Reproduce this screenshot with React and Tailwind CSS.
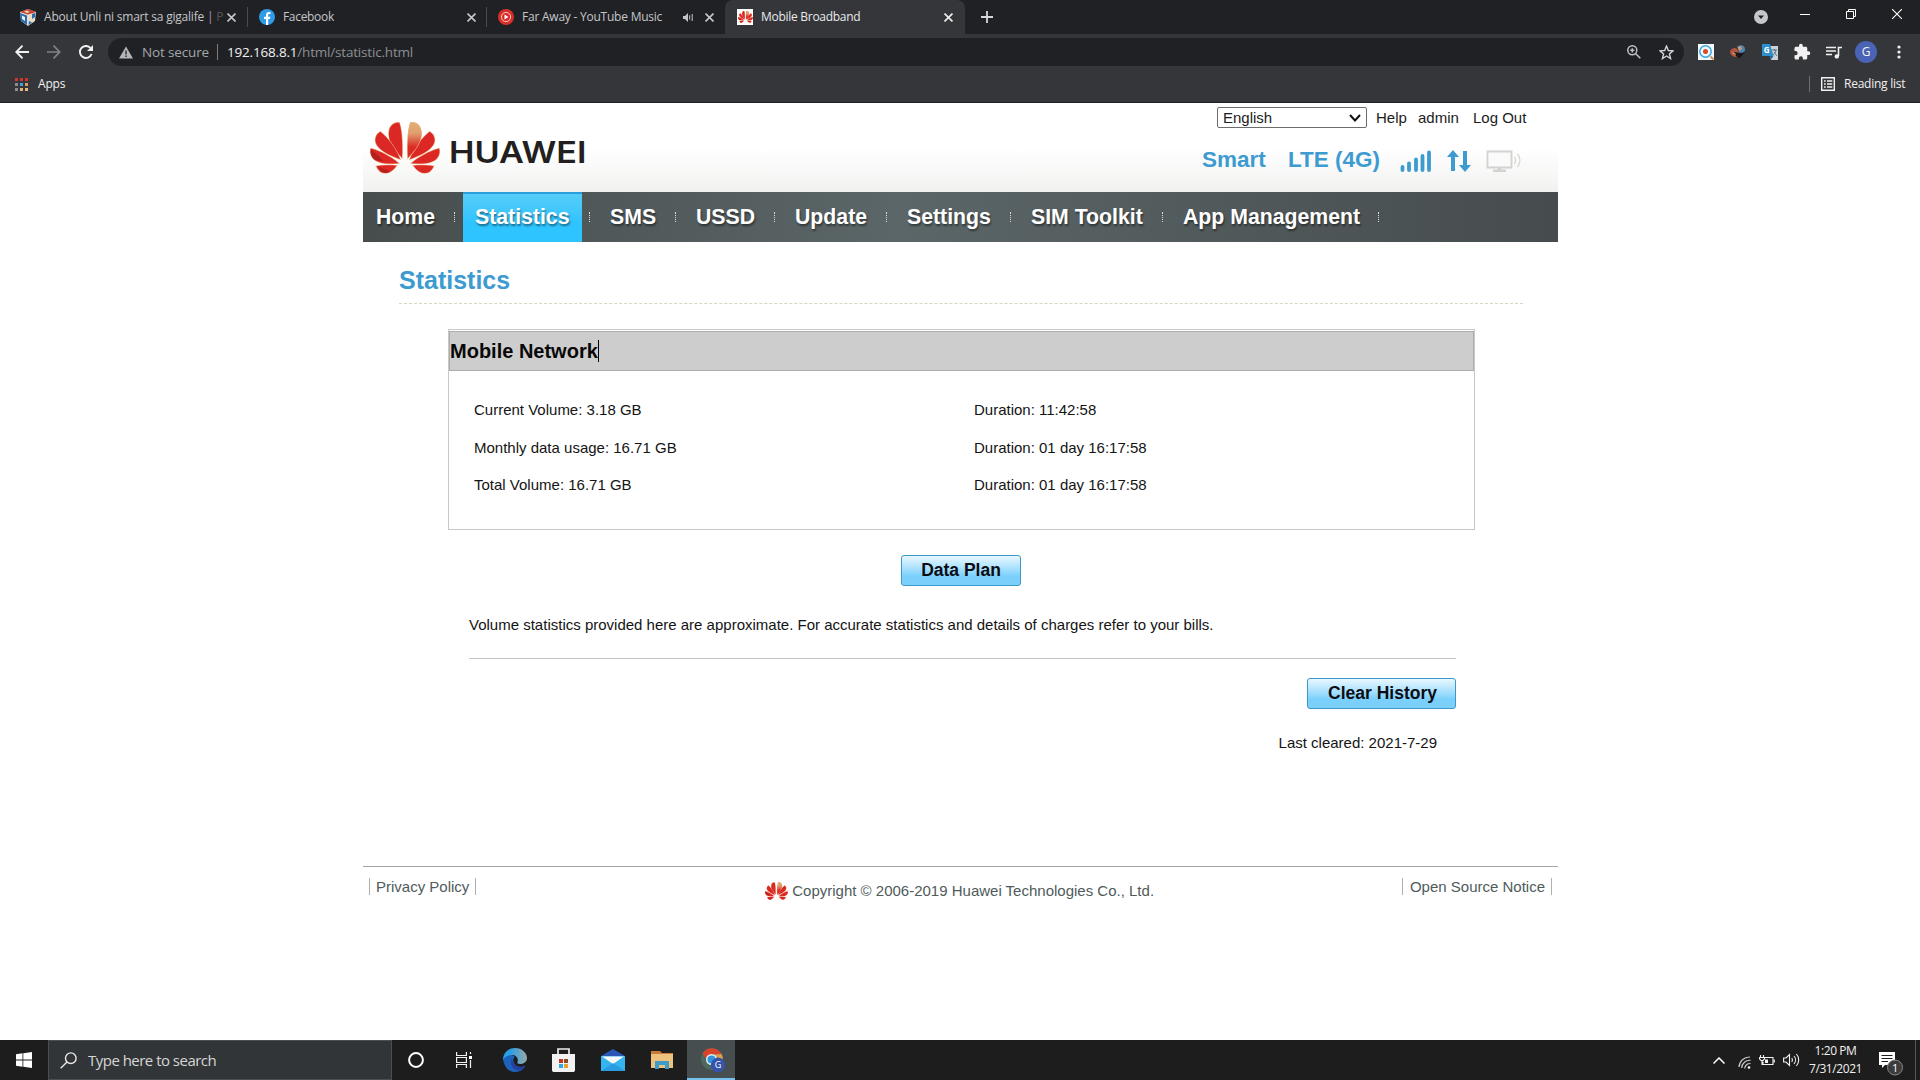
import React from "react";

const ui = "font-['Open_Sans','Noto_Sans',sans-serif]";

function Petals({ className }) {
  const half = (
    <>
      <path d="M32 36C22 26 17 17 19 8C20 3 24 0 29 0C31 4 33 18 32 36Z" />
      <path d="M30 37.5C18 33 8 28 5.500 21C4 16 6 12 10 9.500C17 15 26 26 30 37.500Z" />
      <path d="M28.500 41.500C17 42.500 8 42 3 37C0 33.500 -.5 30 .5 26.500C10 29 21 35 28.500 41.500Z" />
      <path d="M26.500 44C22 50 17.500 52 14 51.500C10 51 7.500 48 6 44.500C12 43.500 20 43.500 26.500 44Z" />
    </>
  );
  return (
    <svg viewBox="-0.500 -0.500 71 53" preserveAspectRatio="none" className={className}>
      <defs>
        <linearGradient id="petal" x1="0" y1="0" x2="0" y2="1">
          <stop offset="0" stopColor="#e0b070" />
          <stop offset=".3" stopColor="#e0a070" />
          <stop offset=".7" stopColor="#dc2a24" />
        </linearGradient>
      </defs>
      <g stroke="#ecb488" strokeWidth="1.200" paintOrder="stroke">
        <g fill="#dc2824">{half}</g>
        <g fill="#dc2824" transform="translate(70 0) scale(-1 1)">
          {half}
          <path fill="url(#petal)" d="M32 36C22 26 17 17 19 8C20 3 24 0 29 0C31 4 33 18 32 36Z" />
        </g>
        <path fill="#a31c1c" stroke="none" d="M3 37C0 33.500 -.5 30 .5 27L13 39C8 39 5 39 3 37ZM8 45L20 50C14 53 10 50 8 45Z" opacity=".7" />
      </g>
    </svg>
  );
}

function Close({ className }) {
  return (
    <svg viewBox="0 0 10 10" className={"h-[9px] w-[9px] shrink-0 " + className} stroke="currentColor" strokeWidth="1.800">
      <path d="M.6 .6L9.400 9.400M9.400 .6L.6 9.400" />
    </svg>
  );
}

function TabStrip() {
  return (
    <div className="flex h-[34px] bg-[#202124] text-[12px] text-[#c4c6ca]">
      <div className="flex w-[247px] items-center pl-[19px]">
        <svg viewBox="0 0 17 17" className="h-[17px] w-[17px]">
          <path fill="#e9dccb" d="M1 3L9 0L17 3L16 12L9 17L2 12Z" />
          <path fill="#c8402c" d="M1 3L9 0L17 3L9 5.500Z" />
          <path fill="#e8d8c8" d="M5 2.600L8 1.500L11 3L8 4Z" />
          <path fill="#2b6cb0" d="M1 4L8 6.500V16L2 12ZM13 5L16 4V8L13 10Z" />
          <path fill="#e8eef5" d="M3 6.500L6 8V12L3 10Z" />
          <path fill="#2b6cb0" d="M10 12L13 13.500L9.500 16Z" />
        </svg>
        <div className="ml-2 w-[180px] whitespace-nowrap tracking-[-0.210px]">
          About Unli ni smart sa gigalife <span className="text-[#b58fc0]">|</span> <span className="text-[#55575b]">P</span>
        </div>
        <Close className="ml-[3px] text-[#c4c6ca]" />
      </div>
      <div className="mt-[7px] h-5 w-px bg-[#4a4c50]" />
      <div className="flex w-[238px] items-center pl-[11px]">
        <svg viewBox="0 0 16 16" className="h-4 w-4">
          <circle cx="8" cy="8" r="8" fill="#2f9be6" />
          <path fill="#fff" d="M7 16V10H5V7.700H7V6C7 3.900 8.200 2.900 10 2.900L11.500 3V5H10.400C9.500 5 9.200 5.500 9.200 6.200V7.700H11.400L11 10H9.200V16Z" />
        </svg>
        <div className="ml-2 w-[184px] tracking-[-0.320px]">Facebook</div>
        <Close className="text-[#c4c6ca]" />
      </div>
      <div className="mt-[7px] h-5 w-px bg-[#4a4c50]" />
      <div className="flex w-[238px] items-center pl-[11px]">
        <svg viewBox="0 0 16 16" className="h-4 w-4" fill="none">
          <circle cx="8" cy="8" r="8" fill="#d92f2c" />
          <circle cx="8" cy="8" r="4.600" stroke="#f5c8b8" strokeWidth="1" />
          <path fill="#fff" d="M6.500 5.500L10.500 8L6.500 10.500Z" />
        </svg>
        <div className="ml-2 w-[161px] whitespace-nowrap tracking-[-0.230px]">Far Away - YouTube Music</div>
        <svg viewBox="0 0 11 9" className="h-[9px] w-[11px] shrink-0" fill="none" stroke="#c4c6ca">
          <path fill="#c4c6ca" stroke="none" d="M0 3H2L5 0V9L2 6H0Z" />
          <path d="M6.700 2.300V6.700M9.200 1V8" />
        </svg>
        <Close className="ml-[11px] text-[#c4c6ca]" />
      </div>
      <div className="flex h-[34px] w-[240px] items-center rounded-t-[8px] bg-[#35363a] pl-3 text-[#e8eaed]">
        <span className="flex h-4 w-4 items-center justify-center bg-white">
          <Petals className="h-3 w-[15px]" />
        </span>
        <div className="ml-2 w-[183px] tracking-[-0.280px]">Mobile Broadband</div>
        <Close className="text-[#eeeeee]" />
      </div>
      <svg viewBox="0 0 12 12" className="ml-4 mt-[11px] h-3 w-3" stroke="#d5d7da" strokeWidth="1.800">
        <path d="M6 0V12M0 6H12" />
      </svg>
      <div className="ml-auto flex">
        <svg viewBox="0 0 14 14" className="mt-[10px] h-[14px] w-[14px]">
          <circle cx="7" cy="7" r="7" fill="#c4c6ca" />
          <path d="M4 5.500H10L7 9Z" fill="#202124" />
        </svg>
        <div className="ml-8 mt-[14px] h-px w-[10px] bg-white" />
        <svg viewBox="0 0 10 10" className="ml-9 mt-[9px] h-[10px] w-[10px]" fill="none" stroke="#fff">
          <path d="M.5 2.500H7.500V9.500H.5ZM2.500 2.500V.5H9.500V7.500H7.500" />
        </svg>
        <svg viewBox="0 0 10 10" className="ml-9 mr-[18px] mt-[9px] h-[10px] w-[10px]" stroke="#fff" strokeWidth="1.100">
          <path d="M0 0L10 10M10 0L0 10" />
        </svg>
      </div>
    </div>
  );
}

function Toolbar() {
  return (
    <div className="flex h-[36px] items-center bg-[#35363a] text-[14px]">
      <svg viewBox="0 0 14 14" className="ml-[15px] h-[14px] w-[14px]" fill="none" stroke="#f1f1f1" strokeWidth="1.900">
        <path d="M14 7H1.500M7.500 .7L1.300 7L7.500 13.300" />
      </svg>
      <svg viewBox="0 0 14 14" className="ml-[18px] h-[14px] w-[14px]" fill="none" stroke="#818386" strokeWidth="1.700">
        <path d="M0 7H12.500M6.500 .7L12.700 7L6.500 13.300" />
      </svg>
      <svg viewBox="0 0 14 14" className="ml-[18px] h-[14px] w-[14px]" fill="none" stroke="#f1f1f1" strokeWidth="1.900">
        <path d="M12.600 9A6 6 0 1 1 11.500 3" />
        <path fill="#f1f1f1" stroke="none" d="M14 0V6H8Z" />
      </svg>
      <div className="ml-[15px] flex h-7 w-[1576px] items-center rounded-full bg-[#202124] pl-[11px]">
        <svg viewBox="0 0 14 12" className="h-[13px] w-[14px]">
          <path fill="#b4b6ba" d="M7 0L14 12H0Z" />
          <path stroke="#202124" strokeWidth="1.300" d="M7 4V8M7 9V10.400" />
        </svg>
        <div className="ml-[9px] w-[68px] whitespace-nowrap text-[13.500px] tracking-[-0.150px] text-[#a3a6aa]">Not secure</div>
        <div className="ml-[7px] h-4 w-px bg-[#7b7d81]" />
        <div className="ml-[9px] whitespace-nowrap text-[13.500px] tracking-[-0.190px] text-[#8d9094]">
          <span className="text-[#f1f1f1]">192.168.8.1</span>/html/statistic.html
        </div>
        <svg viewBox="0 0 14 14" className="ml-auto h-[14px] w-[14px]" fill="none" stroke="#bdc1c6" strokeWidth="1.500">
          <circle cx="5.300" cy="5.300" r="4.500" />
          <path d="M8.700 8.700L13.300 13.300M5.300 3.200V7.400M3.200 5.300H7.400" />
        </svg>
        <svg viewBox="0 0 14 14" className="ml-[18px] mr-[10px] h-[15px] w-[15px]" fill="none" stroke="#d0d3d7" strokeWidth="1.300">
          <path d="M7 1L8.700 5.100L13.100 5.400L9.700 8.300L10.800 12.700L7 10.300L3.200 12.700L4.300 8.300L.9 5.400L5.300 5.100Z" />
        </svg>
      </div>
      <svg viewBox="0 0 16 16" className="ml-[14px] h-4 w-4" fill="none">
        <path fill="#f2f8fc" d="M0 0H16V16H0Z" />
        <circle cx="7.500" cy="7.500" r="5.700" stroke="#35a5e0" strokeWidth="1.500" />
        <circle cx="7.500" cy="7.500" r="2.500" fill="#d64a28" />
        <path d="M12.500 12.500L15.500 15.500" stroke="#d89050" strokeWidth="2" />
      </svg>
      <svg viewBox="0 0 16 16" className="ml-4 h-4 w-4">
        <path fill="#b5563c" d="M0 7C2 4 5 3 7 5L11 12L7 13C3 13 0 11 0 7Z" />
        <path fill="#4c83b5" d="M7 3C10 0 15 1 15 5C15 8 13 10 10 10Z" />
        <path fill="#15171a" d="M3 8L11 9L15 8L10 14L7 13Z" />
        <path fill="#d49a68" d="M8 3L11 2L12 5L9 7ZM2 8L5 9L6 11L3 10Z" />
      </svg>
      <svg viewBox="0 0 16 16" className="ml-4 h-4 w-4">
        <path fill="#c9d3d8" d="M6 2H16V16H9Z" />
        <path fill="#2d8fce" d="M0 0H8L11.500 12H0Z" />
        <path fill="#1b68a8" d="M8 12H11.500L9 15.500Z" />
        <path d="M10 6H15M12.500 5V7M14 6C13.500 9 12 10.500 11 11M12 8L15 12" stroke="#5d7480" fill="none" />
        <text x="1.700" y="9" fontSize="8" fontWeight="700" fill="#fff">G</text>
      </svg>
      <svg viewBox="0 0 24 24" className="ml-[15px] h-[18px] w-[18px]" fill="#f1f1f1">
        <path d="M20.500 11H19V7c0-1.100-.9-2-2-2h-4V3.500a2.500 2.500 0 0 0-5 0V5H4c-1.100 0-2 .9-2 2v3.800h1.500a2.700 2.700 0 0 1 0 5.400H2V20c0 1.100.9 2 2 2h3.800v-1.500a2.700 2.700 0 0 1 5.400 0V22H17c1.100 0 2-.9 2-2v-4h1.500a2.500 2.500 0 0 0 0-5z" />
      </svg>
      <svg viewBox="0 0 16 13" className="ml-[15px] h-[13px] w-4" fill="none" stroke="#f1f1f1" strokeWidth="1.600">
        <path d="M0 1.500H10M0 5H10M0 8.500H6M12.500 10V1.500H16" />
        <circle cx="10.800" cy="10.400" r="2.200" fill="#f1f1f1" stroke="none" />
      </svg>
      <div className="ml-[13px] flex h-[22px] w-[22px] items-center justify-center rounded-full bg-[#4a63b4] text-[12px] text-[#f5f5f5]">G</div>
      <svg viewBox="0 0 4 14" className="ml-5 h-[14px] w-1" fill="#f1f1f1">
        <circle cx="2" cy="2" r="1.600" />
        <circle cx="2" cy="7" r="1.600" />
        <circle cx="2" cy="12" r="1.600" />
      </svg>
    </div>
  );
}

function Bookmarks() {
  const dots = ["#d0342c", "#d0342c", "#d0342c", "#8a8d91", "#4a9fd8", "#d8a060", "#8a8d91", "#e0b080", "#e8b878"];
  return (
    <div className="flex h-[32px] items-center bg-[#35363a] pb-[4px] text-[12px] text-[#f1f1f1]">
      <div className="ml-[15px] grid grid-cols-3 gap-x-[2px] gap-y-[2px]">
        {dots.map((c, i) => (
          <span key={i} className="h-[3px] w-[3px]" style={{ background: c }} />
        ))}
      </div>
      <div className="ml-[10px] tracking-[-0.200px]">Apps</div>
      <div className="ml-auto h-4 w-px bg-[#6d6f73]" />
      <svg viewBox="0 0 14 14" className="ml-[11px] h-[14px] w-[14px]" fill="none" stroke="#f1f1f1" strokeWidth="1.400">
        <path d="M.7 .7H13.300V13.300H.7ZM3 4H4.700M6 4H11.300M3 7H4.700M6 7H11.300M3 10H4.700M6 10H11.300" />
      </svg>
      <div className="ml-[9px] mr-[14px] w-[62px] whitespace-nowrap tracking-[-0.250px]">Reading list</div>
    </div>
  );
}

function Header() {
  return (
    <div className="flex h-[89px] bg-linear-to-b from-white from-50% to-[#f1f2f0]">
      <Petals className="ml-[7px] mt-[19px] h-[52px] w-[70px]" />
      <svg viewBox="0 0 138 30" className="ml-[9px] mt-[30px] h-[40px] w-[144px]" preserveAspectRatio="none" overflow="visible">
        <g transform="scale(.9583 .75)">
          <text x="0" y="30" fontSize="30.500" fontWeight="600" fill="#231f20" textLength="137.500" lengthAdjust="spacingAndGlyphs" fontFamily="Inter, sans-serif">HUAWEI</text>
        </g>
      </svg>
      <div className="ml-auto flex w-[360px] flex-col text-[15px] text-[#1c1c1c]">
        <div className="mt-1 flex h-[21px] items-center">
          <div className="ml-[19px] flex h-[21px] w-[150px] items-center justify-between rounded-[2px] border border-[#6d6d6d] bg-white pl-[5px] pr-[5px] pt-px">
            English
            <svg viewBox="0 0 12 8" className="h-2 w-3" fill="none" stroke="#111" strokeWidth="2"><path d="M1 1L6 6.500L11 1" /></svg>
          </div>
          <div className="ml-[9px] w-[42px] pt-[2px]">Help</div>
          <div className="w-[55px] pt-[2px]">admin</div>
          <div className="whitespace-nowrap pt-[2px]">Log Out</div>
        </div>
        <div className="mt-[19px] flex h-[26px] items-center font-bold text-[22.500px] text-[#3d9bd1]">
          <div className="ml-1 w-[86px]">Smart</div>
          <div className="w-[112px] whitespace-nowrap">LTE (4G)</div>
          <svg viewBox="0 0 32 22" className="mt-[2px] h-[22px] w-8" stroke="#3d9bd1" strokeWidth="3.800" strokeLinecap="round">
            <path d="M2.500 17V20M9 13.500V20M16 9.500V20M22.500 6V20M29 2.500V20" />
          </svg>
          <svg viewBox="0 0 24 22" className="ml-[15px] mt-px h-[22px] w-6" fill="#3d9bd1">
            <path d="M6 0L12 7H8V21H4V7H0ZM18 22L24 15H20V1H16V15H12Z" />
          </svg>
          <svg viewBox="0 0 36 22" className="ml-[15px] mt-px h-[22px] w-9" fill="none" stroke="#d2d2cf" strokeWidth="1.800">
            <path fill="#fafafa" d="M1.500 1.500H25.500V17.500H1.500Z" />
            <path d="M7 21H20M13.500 17.500V21" strokeWidth="3" />
            <path d="M28.500 7C30 9 30 11 28.500 14M31.500 4C34.500 8 34.500 13 31.500 17" strokeWidth="1.300" stroke="#dad7d0" />
          </svg>
        </div>
      </div>
    </div>
  );
}

function NavItem({ label, className }) {
  return (
    <div className={"flex items-center whitespace-nowrap " + className}>
      <span className="mr-5 h-[10px] border-l border-dotted border-[#d8dcdc]" />
      <span className="pt-[2px]">{label}</span>
    </div>
  );
}

function Nav() {
  return (
    <div className="flex h-[50px] bg-linear-to-r from-[#474d4d] via-[#5b6668] via-45% to-[#464c4d] text-[21.250px] font-bold text-white [text-shadow:1px_2px_2px_rgba(0,0,0,0.45)]">
      <div className="flex w-[100px] items-center pl-[13px]">
        <span className="pt-[2px]">Home</span>
        <span className="ml-[19px] h-[10px] border-l border-dotted border-[#d8dcdc]" />
      </div>
      <div className="mr-[7px] flex w-[119px] items-center border-t-2 border-[#289fdc] bg-linear-to-b from-[#55ccf8] to-[#2ec4ff] to-60% pl-[12px]">Statistics</div>
      <NavItem label="SMS" className="w-[86px]" />
      <NavItem label="USSD" className="w-[99px]" />
      <NavItem label="Update" className="w-[112px]" />
      <NavItem label="Settings" className="w-[124px]" />
      <NavItem label="SIM Toolkit" className="w-[152px]" />
      <NavItem label="App Management" className="w-[216px]" />
      <NavItem label="" className="w-[10px]" />
    </div>
  );
}

function Button({ children, className }) {
  return (
    <button className={"h-[31px] whitespace-nowrap rounded-[3px] border border-[#3c97ca] bg-linear-to-b from-[#e9f8ff] to-[#7ad0fb] to-70% text-center text-[17.500px] leading-[29px] font-bold text-[#0c0c14] " + className}>
      {children}
    </button>
  );
}

function Content() {
  const rows = [
    ["Current Volume: 3.18 GB", "Duration: 11:42:58"],
    ["Monthly data usage: 16.71 GB", "Duration: 01 day 16:17:58"],
    ["Total Volume: 16.71 GB", "Duration: 01 day 16:17:58"],
  ];
  return (
    <div className="flex h-[624px] flex-col">
      <h1 className="ml-9 mr-[35px] mt-[19px] h-[43px] border-b border-dashed border-[#d9d6bd] text-[25px] leading-[38px] font-bold text-[#3d9bd1]">Statistics</h1>
      <div className="ml-[85px] mt-[25px] h-[201px] w-[1027px] border border-[#c8c8c8] pt-px">
        <div className="flex h-10 items-center border border-[#acacac] bg-[#cdcdcd] text-[20px] font-bold text-[#080808]">
          <span>Mobile Network</span>
          <span className="h-[22px] w-px bg-black" />
        </div>
        <div className="mt-[20px] pl-[25px]">
          {rows.map(([a, b]) => (
            <div key={a} className="flex h-[37.500px] items-center first:h-[38px]">
              <div className="w-[500px]">{a}</div>
              <div>{b}</div>
            </div>
          ))}
        </div>
      </div>
      <Button className="ml-[538px] mt-[25px] w-[120px]">Data Plan</Button>
      <div className="ml-[106px] mr-[102px] mt-[27px] flex h-[46px] items-start border-b border-[#c4c4c4] leading-6">
        Volume statistics provided here are approximate. For accurate statistics and details of charges refer to your bills.
      </div>
      <div className="mr-[102px] flex flex-col items-end">
        <Button className="mt-[19px] w-[149px] pl-[2px]">Clear History</Button>
        <div className="mr-[19px] mt-[22px] leading-6">Last cleared: 2021-7-29</div>
      </div>
    </div>
  );
}

function Footer() {
  return (
    <div className="flex items-start justify-between border-t border-[#a6a6a6] px-[6px] pt-[11px] text-[#4f5b5b]">
      <div className="h-[17px] border-x border-[#b0b0b0] px-[6px] leading-[17px]">Privacy Policy</div>
      <div className="ml-[41px] mt-1 flex h-[18px] items-center">
        <Petals className="mr-1 h-[18px] w-[23px]" />
        Copyright © 2006-2019 Huawei Technologies Co., Ltd.
      </div>
      <div className="h-[17px] border-x border-[#b0b0b0] pl-[7px] pr-[6px] leading-[17px]">Open Source Notice</div>
    </div>
  );
}

function Taskbar() {
  return (
    <div className={"flex h-10 items-center bg-[#1d1d1d] text-[#f1f1f1] " + ui}>
      <svg viewBox="0 0 16 16" className="mx-4 h-4 w-4" fill="#fff">
        <path d="M0 2.300L6.500 1.300V7.500H0ZM7.300 1.200L16 0V7.500H7.300ZM0 8.400H6.500V14.700L0 13.700ZM7.300 8.400H16V16L7.300 14.800Z" />
      </svg>
      <div className="flex h-10 w-[344px] items-center border border-[#4c4f50] bg-[#323537] pl-[11px]">
        <svg viewBox="0 0 17 17" className="h-[17px] w-[17px]" fill="none" stroke="#e8e8e8" strokeWidth="1.400">
          <circle cx="10.800" cy="6.200" r="5.300" />
          <path d="M7 10L.7 16.300" />
        </svg>
        <div className="ml-[11px] whitespace-nowrap text-[15px] tracking-[-0.520px] text-[#d6d6d6]">Type here to search</div>
      </div>
      <svg viewBox="0 0 16 16" className="ml-4 h-4 w-4" fill="none" stroke="#fff" strokeWidth="2"><circle cx="8" cy="8" r="6.900" /></svg>
      <svg viewBox="0 0 16 16" className="ml-[32px] h-4 w-4" fill="none" stroke="#f1f1f1" strokeWidth="1.200">
        <path d="M.6 0V3.500H10.400V0M.6 16V12.500H10.400V16M.6 5.500H10.400V10.500H.6ZM14.500 0V2M14.500 8V16" />
        <path fill="#fff" stroke="none" d="M13 4H16V7H13Z" />
      </svg>
      <svg viewBox="0 0 24 24" className="ml-[31px] h-6 w-6">
        <defs><linearGradient id="edge"><stop offset=".3" stopColor="#2a9fe6" /><stop offset="1" stopColor="#9aa8a6" /></linearGradient></defs>
        <path fill="#1b62ba" d="M0 11C1 17 4 24 12 24C17 24 21 21 22 18C18 20 13 19 11 15C10 12 10 10 12 9C8 5 1 7 0 11Z" />
        <path fill="url(#edge)" d="M0 12C0 5 5 0 12 0C19 0 24 5 24 10C24 14 20 16 17 16C14 16 14 15 14.500 14C15.500 11 14 7 9 7C5 7 1 9 0 12Z" />
        <path fill="#253f9f" d="M9 11C6 16 10 22 16 22.500C19 22 21.500 20 22.500 17.500C17 20 10 19 9 11Z" />
      </svg>
      <svg viewBox="0 0 23 24" className="ml-[25px] h-6 w-[23px]">
        <path fill="none" stroke="#ececec" strokeWidth="1.700" d="M6 7V1H17V7" />
        <path fill="#f2f2f2" d="M0 6H23V22C23 23.500 22 24 21 24H2C1 24 0 23.500 0 22Z" />
        <path fill="#c2371f" d="M7 11H11V15H7Z" /><path fill="#8c4a20" d="M12 11H16V15H12Z" />
        <path fill="#2ea9e8" d="M7 16H11V20H7Z" /><path fill="#e8a030" d="M12 16H16V20H12Z" />
      </svg>
      <svg viewBox="0 0 24 22" className="ml-[26px] h-[22px] w-6">
        <path fill="#2857b8" d="M0 7L12 0L24 7V10H0Z" />
        <path fill="#35b5ef" d="M0 7H24V22H0Z" />
        <path fill="#f7f7f7" d="M1 7.500H23L12 15Z" />
        <path fill="#1f85d6" d="M0 22L12 14L24 22Z" opacity=".5" />
      </svg>
      <svg viewBox="0 0 22 18" className="ml-[26px] h-[18px] w-[22px]">
        <path fill="#c77b38" d="M0 0H9L11 2H22V5H0Z" />
        <path fill="#ecc27e" d="M0 3H22V17H0Z" />
        <path fill="#3f9bc8" d="M4 10H18V18H14V14H8V18H4Z" />
      </svg>
      <div className="ml-[14px] flex h-10 w-12 items-center justify-center border-b-2 border-[#76c2ee] bg-[#474e50]">
        <svg viewBox="0 0 24 24" className="ml-1 mt-[2px] h-6 w-6">
          <circle cx="11" cy="11" r="11" fill="#4c6b5e" />
          <path fill="#d8432a" d="M1.500 5.500A11 11 0 0 1 20.500 6L11 6.500L6 12Z" />
          <path fill="#d8a050" d="M20.500 6A11 11 0 0 1 22 11L15 9L12 6.500Z" />
          <circle cx="10.500" cy="11.500" r="4.800" fill="#2f96dc" stroke="#e8eef2" strokeWidth="1.500" />
          <circle cx="17" cy="17" r="7.200" fill="#3553a8" />
          <text x="13.800" y="20.300" fontSize="9" fill="#fff">G</text>
        </svg>
      </div>
      <div className="ml-auto flex h-10 items-center">
        <svg viewBox="0 0 12 7" className="h-[7px] w-3" fill="none" stroke="#fff" strokeWidth="1.500"><path d="M.5 6.500L6 1L11.500 6.500" /></svg>
        <svg viewBox="0 0 13 13" className="ml-[13px] mt-1 h-[13px] w-[13px]" fill="none" stroke="#c9c9c9" strokeWidth="1.200">
          <path d="M1 11A10.500 10.500 0 0 1 12 1M3.700 12A8 8 0 0 1 12.500 4.300M6.700 12.500A5.500 5.500 0 0 1 12.500 7.500" />
          <circle cx="11" cy="11.500" r="1.300" fill="#fff" stroke="none" />
        </svg>
        <svg viewBox="0 0 16 11" className="ml-2 h-[11px] w-4" fill="none" stroke="#f1f1f1" strokeWidth="1.100">
          <path d="M6 2.500H14V9.500H4V6.500M15.300 4.500V7.500M1.500 0V2M4.500 0V2M.5 2.500H5.500V4L4 5.500H2L.5 4ZM3 5.500V10" />
          <path d="M6 4.500H9V8H6Z" fill="#f1f1f1" stroke="none" />
        </svg>
        <svg viewBox="0 0 17 14" className="ml-2 h-[14px] w-[17px]" fill="none" stroke="#f1f1f1" strokeWidth="1.100">
          <path d="M.6 5H3L6.500 1.500V12.500L3 9H.6ZM8.800 5A3.500 3.500 0 0 1 8.800 9M11 3A6 6 0 0 1 11 11M13.400 1A9 9 0 0 1 13.400 13" />
        </svg>
        <div className="ml-[9px] w-[53px] whitespace-nowrap pb-px text-center text-[12px] leading-[18px] tracking-[-0.420px]">
          <div>1:20 PM</div>
          <div>7/31/2021</div>
        </div>
        <div className="ml-[17px] flex w-6">
          <svg viewBox="0 0 24 24" className="mt-2 h-6 w-6">
            <path fill="#fff" d="M0 0H16V13H6L3 16V13H0Z" />
            <path stroke="#1d1d1d" d="M2.500 3.500H13.500M2.500 6.500H13.500M2.500 9.500H9" />
            <circle cx="16" cy="15.500" r="7.500" fill="#3c3c3c" stroke="#888" />
            <text x="13" y="19.500" fontSize="11" fill="#fff">1</text>
          </svg>
        </div>
        <div className="ml-[12px] mr-[4px] h-10 w-px bg-[#555]" />
      </div>
    </div>
  );
}

export default function App() {
  return (
    <div className="flex h-[1080px] w-[1920px] flex-col overflow-hidden bg-white">
      <div className={ui}>
        <TabStrip />
        <Toolbar />
        <Bookmarks />
        <div className="h-px bg-[#202124]" />
      </div>
      <div className="ml-[363px] flex w-[1195px] flex-1 flex-col font-['Liberation_Sans',Arial,sans-serif] text-[15px] text-[#141414]">
        <Header />
        <Nav />
        <Content />
        <Footer />
      </div>
      <Taskbar />
    </div>
  );
}
